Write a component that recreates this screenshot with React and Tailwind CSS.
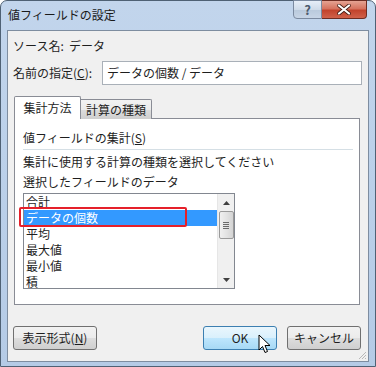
import React from "react";

const font = { fontFamily: '"Noto Sans CJK JP", "Noto Sans", sans-serif' };

const items = ["合計", "データの個数", "平均", "最大値", "最小値", "積"];

const WinButton = ({ children, active = false, className = "" }) => (
  <div
    className={`h-[24px] flex items-center justify-center rounded-[3px] border text-[12px] text-[#1e1e1e] ${
      active
        ? "border-[#3c7fb1] bg-[linear-gradient(#eaf6fd_0%,#d9f0fc_50%,#bee6fd_51%,#a7d9f5_100%)]"
        : "border-[#707070] bg-[linear-gradient(#f2f2f2_0%,#ebebeb_50%,#dddddd_51%,#cfcfcf_100%)]"
    } ${className}`}
  >
    {children}
  </div>
);

const App = () => {
  return (
    <div className="w-[376px] h-[367px] bg-white" style={font}>
      <div className="relative w-[376px] h-[367px] rounded-t-[7px] border border-[#4f6174] bg-[linear-gradient(180deg,#c2d5ec_0%,#bcd1ea_40%,#b5cbe6_100%)] flex flex-col">
        {/* Title bar */}
        <div className="h-[29px] flex items-start relative">
          <div className="pl-[7px] pt-[6px] text-[12px] text-[#1a1a1a] leading-[16px]">
            値フィールドの設定
          </div>
          <div className="absolute right-[8px] top-[-1px] flex">
            <div className="w-[29px] h-[19px] rounded-bl-[4px] border border-[#7b8aa0] bg-[linear-gradient(#e6eef8_0%,#cfdbe9_50%,#b9c9dc_51%,#c7d5e6_100%)] flex items-center justify-center text-[13px] font-bold text-[#4c5a6c]">
              ?
            </div>
            <div className="w-[45px] h-[19px] rounded-br-[4px] border border-l-0 border-[#6d2c22] bg-[linear-gradient(#e5a393_0%,#d6735f_45%,#c2432c_55%,#d0614a_100%)] flex items-center justify-center">
              <svg width="14" height="11" viewBox="0 0 14 11">
                <path d="M2 1.5 L12 9.5 M12 1.5 L2 9.5" stroke="#3e1810" strokeWidth="3.6" strokeLinecap="round" />
                <path d="M2 1.5 L12 9.5 M12 1.5 L2 9.5" stroke="#ffffff" strokeWidth="2.2" strokeLinecap="round" />
              </svg>
            </div>
          </div>
        </div>

        {/* Client area */}
        <div className="mx-[6px] h-[332px] border border-[#7e8da0] bg-[#f0f0f0] relative text-[12px] text-[#1e1e1e] leading-[16px]">
          <div className="pl-[5px] pt-[7px]">ソース名:&nbsp; データ</div>

          <div className="flex items-center mt-[7px] pl-[5px]">
            <div className="w-[89px]">
              名前の指定(<span className="underline">C</span>):
            </div>
            <div className="w-[260px] h-[24px] border border-[#a9b0b8] bg-white flex items-center pl-[4px]">
              データの個数 / データ
            </div>
          </div>

          {/* Tabs */}
          <div className="mt-[11px] ml-[6px] w-[346px]">
            <div className="flex items-end h-[23px] relative z-10">
              <div className="w-[67px] h-[23px] border border-b-0 border-[#898c95] bg-white flex items-center justify-center rounded-t-[2px]">
                集計方法
              </div>
              <div className="w-[71px] h-[20px] border border-l-0 border-b-0 border-[#898c95] bg-[linear-gradient(#f2f2f2_0%,#ebebeb_50%,#dddddd_51%,#cfcfcf_100%)] flex items-center justify-center rounded-tr-[2px]">
                計算の種類
              </div>
            </div>
            <div className="h-[187px] border border-[#898c95] bg-white -mt-px pt-[11px] px-[8px] relative">
              <div>
                値フィールドの集計(<span className="underline">S</span>)
              </div>
              <div className="mt-[3px] h-px bg-[#d5dfe5] w-[330px]" />
              <div className="mt-[4px]">集計に使用する計算の種類を選択してください</div>
              <div className="mt-[4px]">選択したフィールドのデータ</div>

              {/* List box */}
              <div className="mt-[3px] w-[212px] h-[96px] border border-[#828790] bg-white flex">
                <div className="flex-1 flex flex-col">
                  {items.map((it, i) => (
                    <div
                      key={it}
                      className={`h-[16px] pl-[2px] leading-[16px] ${
                        i === 1 ? "bg-[#3399ff] text-white" : ""
                      }`}
                    >
                      {it}
                    </div>
                  ))}
                </div>
                <div className="w-[17px] bg-[#f0f0f0] border-l border-[#e6e6e6] flex flex-col items-center">
                  <div className="h-[17px] flex items-center justify-center">
                    <svg width="7" height="4" viewBox="0 0 7 4">
                      <path d="M0 4 L3.5 0 L7 4 Z" fill="#404040" />
                    </svg>
                  </div>
                  <div className="w-[15px] h-[28px] rounded-[2px] border border-[#9a9a9a] bg-[linear-gradient(90deg,#f0f0f0_0%,#e3e3e3_50%,#d4d4d4_100%)] flex flex-col items-center justify-center gap-[1px]">
                    <div className="w-[6px] h-px bg-[#6a6a6a]" />
                    <div className="w-[6px] h-px bg-[#6a6a6a]" />
                    <div className="w-[6px] h-px bg-[#6a6a6a]" />
                    <div className="w-[6px] h-px bg-[#6a6a6a]" />
                  </div>
                  <div className="flex-1" />
                  <div className="h-[17px] flex items-center justify-center">
                    <svg width="7" height="4" viewBox="0 0 7 4">
                      <path d="M0 0 L7 0 L3.5 4 Z" fill="#404040" />
                    </svg>
                  </div>
                </div>
              </div>

              {/* Red highlight box */}
              <div className="absolute left-[4px] top-[88px] w-[168px] h-[20px] border-2 border-[#e5202a] rounded-[2px]" />
            </div>
          </div>

          {/* Bottom buttons */}
          <div className="absolute left-[5px] right-[7px] top-[295px] flex">
            <WinButton className="w-[84px]">
              表示形式(<span className="underline">N</span>)
            </WinButton>
            <div className="flex-1" />
            <WinButton active className="w-[74px]">
              OK
            </WinButton>
            <WinButton className="w-[74px] ml-[10px]">キャンセル</WinButton>
          </div>

          {/* Resize grip */}
          <svg className="absolute right-[1px] bottom-[1px]" width="10" height="10" viewBox="0 0 10 10">
            <path d="M9 2 L2 9 M9 5 L5 9 M9 8 L8 9" stroke="#b8b8b8" strokeWidth="1" />
          </svg>

          {/* Mouse cursor */}
          <svg className="absolute left-[250px] top-[303px]" width="14" height="21" viewBox="0 0 14 21">
            <path
              d="M1 1 L1 16 L4.5 12.5 L7 18.5 L9.5 17.5 L7 11.5 L12 11.5 Z"
              fill="#ffffff"
              stroke="#000000"
              strokeWidth="1"
              strokeLinejoin="round"
            />
          </svg>
        </div>
      </div>
    </div>
  );
};

export default App;
